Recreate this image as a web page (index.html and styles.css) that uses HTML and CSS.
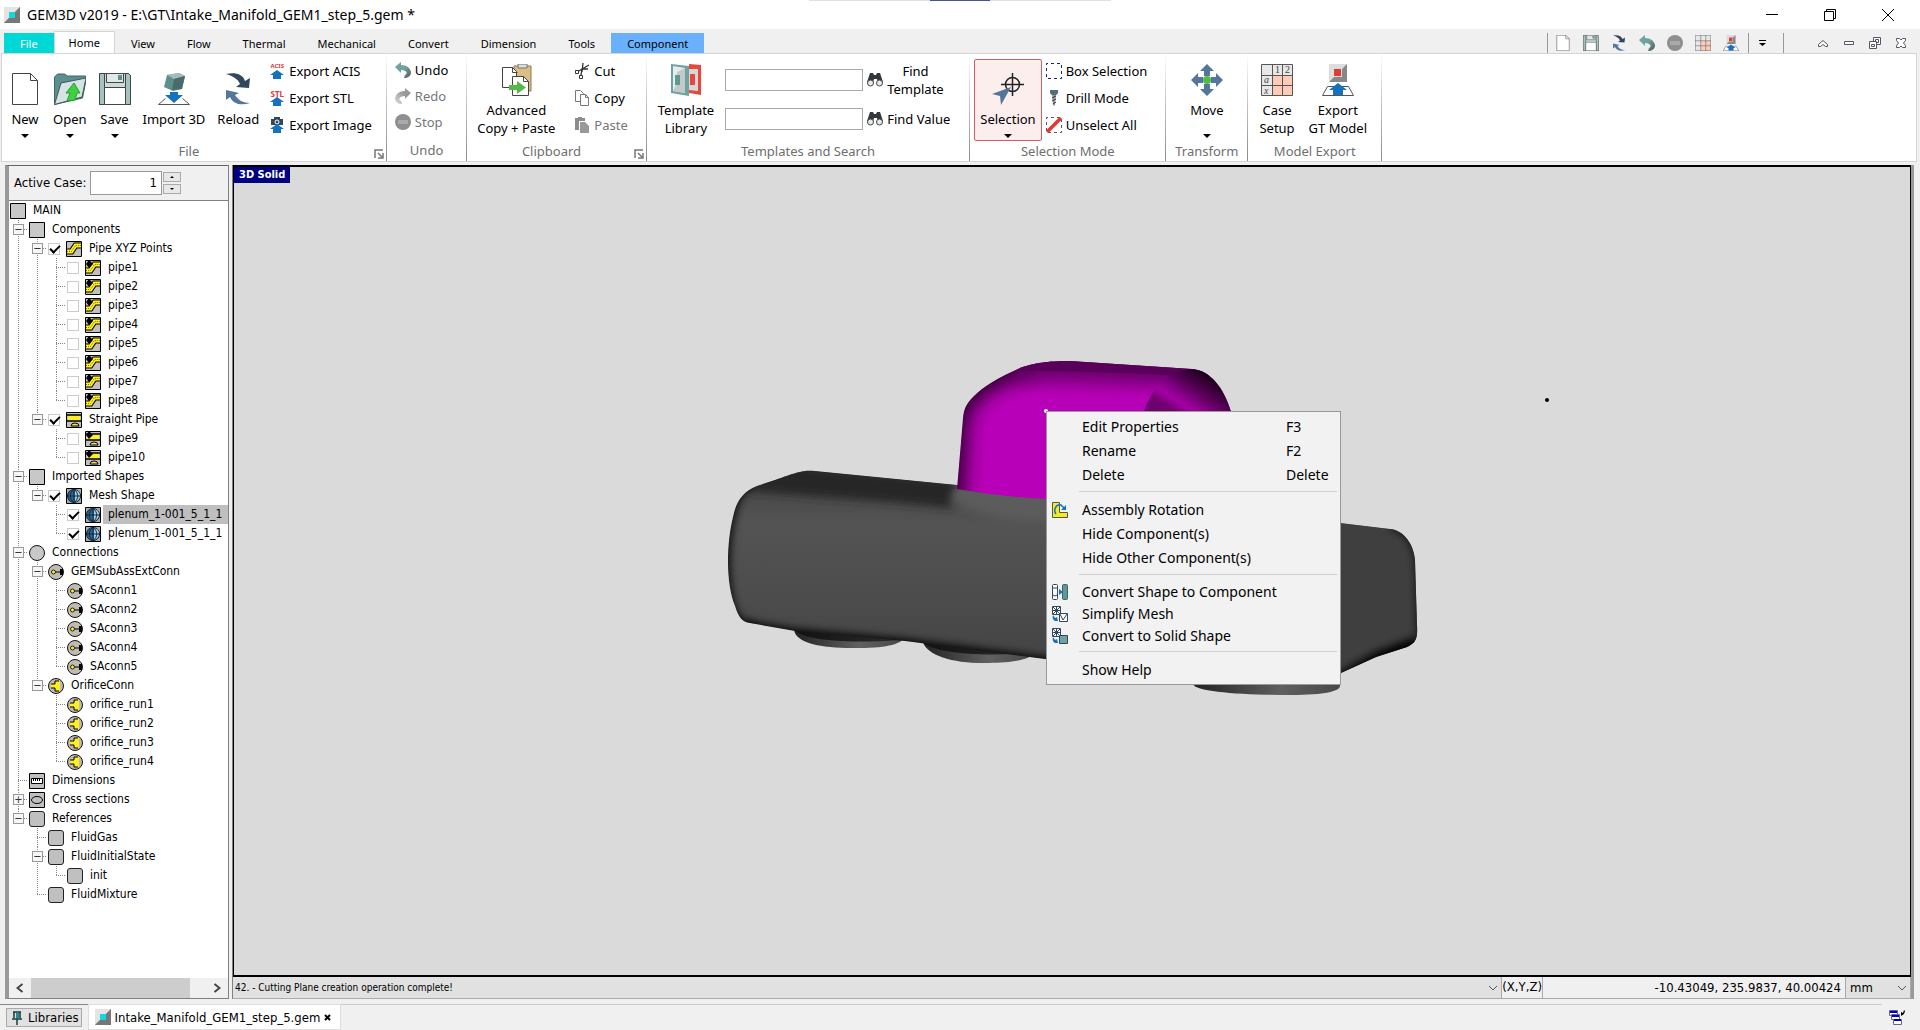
FILE: index.html
```
<!DOCTYPE html>
<html lang="en">
<head>
    <meta charset="utf-8">
    <title>GEM3D v2019</title>
    <meta name="viewport" content="width=device-width, initial-scale=1">
    <link rel="stylesheet" href="styles.css">
</head>
<body>
    <!-- shared icons -->
    <svg class="sprite" aria-hidden="true">
        <defs>
            <linearGradient id="g-undo" x1="0" y1="0" x2="1" y2="1">
                <stop offset="0.5" stop-color="#6fa3a0"/><stop offset="1" stop-color="#555"/>
            </linearGradient>
            <linearGradient id="g-redo" x1="1" y1="0" x2="0" y2="1">
                <stop offset="0.4" stop-color="#999"/><stop offset="1" stop-color="#ddd"/>
            </linearGradient>
        </defs>
        <symbol id="i-app" viewBox="0 0 16 16">
            <path d="M0 0h16v16H0z" fill="#999"/><path d="M0 0h16L11 5H5v6L0 16z" fill="#e4e4e4"/><path d="M16 0v16H0l5-5h6V5z" fill="#777"/>
            <path d="M5 5h6v6H5z" fill="#14d8dc"/>
        </symbol>
        <symbol id="i-new" viewBox="0 0 32 32"><path d="M3.500.5h18l7 7v24h-25z" fill="#fff" stroke="#444"/><path d="M21.500.5v7h7" fill="none" stroke="#444"/></symbol>
        <symbol id="i-open" viewBox="0 0 32 32">
            <path d="M.5 31.500V4l3-3h7l3 2h18v7l-3 15z" fill="#5d8f8c" stroke="#3f6664"/>
            <path d="M.5 31.500L7 10l25-5-4 19z" fill="#d5e3e2" stroke="#456"/>
            <path d="M20 10l6 10h-3l-2 7-8 1 3-8h-4z" fill="#40d040" stroke="#2a9a35"/>
        </symbol>
        <symbol id="i-save" viewBox="0 0 32 32">
            <path d="M.5.5h29l2 2v29H.5z" fill="#c9dcda" stroke="#444"/><path d="M.5.500h5v31h-5zM26.500.5h3l2 2v29h-5z" fill="#a5c4c1" stroke="#444"/>
            <path d="M7.500.5h17v9h-17z" fill="#dfe9e8" stroke="#444"/><path d="M19 2h4v5h-4z" fill="#5d8f8c"/>
            <path d="M5.500 14.500h21v17h-21z" fill="#fff" stroke="#444"/>
        </symbol>
        <symbol id="i-import" viewBox="0 0 32 32">
            <path d="M9 2l12-2 6 3-3 13-9 2-9-4z" fill="#5d8f8c"/><path d="M9 2l12-2 6 3-11 3z" fill="#a8bbb9"/><path d="M16 6l11-3-3 13-10 1z" fill="#4a6b6e"/>
            <path d="M7.500 25.500L.5 31.500h31l-7-6" fill="#fff" stroke="#555"/>
            <path d="M12 19h8v3h5l-9 8-9-8h5z" fill="#1572bd"/>
        </symbol>
        <symbol id="i-reload" viewBox="0 0 32 32">
            <path d="M4 1c9-2 17 0 19 7l5-3-1 10-13-1 4-3C16 6 11 3 4 1z" fill="#30475e"/>
            <path d="M28 30c-9 3-17 1-20-6l-4 3V17l13 3-4 2c3 5 8 8 15 8z" fill="#52779a"/>
        </symbol>
        <symbol id="i-up" viewBox="0 0 16 9"><path d="M8 0l7 5h-3v4H4V5H1z" fill="#1572bd"/></symbol>
        <symbol id="i-image" viewBox="0 0 16 16">
            <path d="M2 2h3V0h6v2h3v6H2z" fill="#30475e"/><circle cx="8" cy="5" r="2" fill="none" stroke="#fff"/>
            <path d="M8 7l7 5h-3v4H4v-4H1z" fill="#1572bd"/>
        </symbol>
        <symbol id="i-undo" viewBox="0 0 16 16"><path d="M0 5l6-5v3c6 0 9 3 10 7 0 4-3 6-7 6l1-3c3-1 2-5-4-5v3z" fill="url(#g-undo)"/></symbol>
        <symbol id="i-redo" viewBox="0 0 16 16"><path d="M16 5l-6-5v3C4 3 1 6 0 10c0 4 3 6 7 6l-1-3c-3-1-2-5 4-5v3z" fill="url(#g-redo)"/></symbol>
        <symbol id="i-stop" viewBox="0 0 16 16"><circle cx="8" cy="8" r="8" fill="#8f8f8f"/><path d="M3 6h10v4H3z" fill="#aaa"/></symbol>
        <symbol id="i-advanced" viewBox="0 0 32 32">
            <path d="M14 2h17v25H14z" fill="#d9bf86" stroke="#8a7a50"/><path d="M18 0h9v4h-9z" fill="#ddd" stroke="#777"/>
            <path d="M2.500 3.500h10l4 4v16h-14z" fill="#fff" stroke="#444"/><path d="M12.500 3.500v5h5" fill="none" stroke="#444"/>
            <path d="M12.500 12.500h11l5 5v14h-16z" fill="#fff" stroke="#444"/><path d="M23.500 12.500v5h5" fill="none" stroke="#444"/>
            <path d="M9 21h8v-4l9 6.500-9 6.500v-4H9z" fill="#55b948"/>
        </symbol>
        <symbol id="i-cut" viewBox="0 0 16 16">
            <path d="M9 0L8 9M15 2L3 9M14 6H8l-1 6" fill="none" stroke="#333" stroke-width="1.300"/><path d="M1.500 7.500h3v3h-3zM5.500 12.500h3v3h-3z" fill="#fff" stroke="#333"/>
        </symbol>
        <symbol id="i-copy" viewBox="0 0 16 16"><path d="M1.500.5h5l3 3v8h-8z" fill="#fff" stroke="#777"/><path d="M6.500 4.500h5l3 3v8h-8z" fill="#fff" stroke="#777"/><path d="M11.500 4.500v3h3" fill="none" stroke="#777"/></symbol>
        <symbol id="i-paste" viewBox="0 0 16 16"><path d="M1 1h3V0h4v1h3v3H5v9H1z" fill="#8c8c8c"/><path d="M6 5h5l4 4v7H6z" fill="#999"/></symbol>
        <symbol id="i-library" viewBox="0 0 32 32">
            <path d="M31 1v30l-12-2V0z" fill="#e8483c"/><path d="M28 5v22l-9-1V5z" fill="#d8d8d8"/><path d="M20 10h5v11h-5z" fill="#e8483c"/>
            <path d="M1 0l18 2v30L1 29z" fill="#6fa3a0"/><path d="M3 2l12 2v25L3 27z" fill="#e8ecec"/><path d="M3 27l4-8V8l8-4v25z" fill="#c4c8ca"/><path d="M5 11h5v10H5z" fill="#5d9995"/>
        </symbol>
        <symbol id="i-find" viewBox="0 0 16 14">
            <path d="M3 0h3l1 2h2l1-2h3l3 9-5 1-1-4H7l-1 4-6-1z" fill="#34383c"/>
            <circle cx="3.500" cy="10" r="3" fill="#e6eaec" stroke="#444"/><circle cx="12.500" cy="10" r="3" fill="#e6eaec" stroke="#444"/>
        </symbol>
        <symbol id="i-select" viewBox="0 0 32 32">
            <circle cx="20.500" cy="11.500" r="7" fill="none" stroke="#222" stroke-width="1.500"/><path d="M20.500 0v23M9 11.500h23" stroke="#222" stroke-width="1.500"/>
            <path d="M19 14L9 32l-1-9-8-2z" fill="#52779a"/>
        </symbol>
        <symbol id="i-box" viewBox="0 0 16 16"><path d="M.5.5h15v15H.5z" fill="none" stroke="#1a1a9c" stroke-dasharray="3 3" stroke-dashoffset="1.500"/></symbol>
        <symbol id="i-drill" viewBox="0 0 16 16"><path d="M4 0h8v3l-2 2-1 10-1 1-1-1L6 5 4 3z" fill="#9a9a9a"/><path d="M4 0h8v3l-2 2H6L4 3z" fill="#52707c"/><path d="M6 8l4-2M6 11l4-2M7 14l3-2" stroke="#333"/></symbol>
        <symbol id="i-unselect" viewBox="0 0 16 16"><path d="M.5.5h15v15H.5z" fill="none" stroke="#556" stroke-dasharray="3 3" stroke-dashoffset="1.500"/><path d="M1 15L15 1" stroke="#dc3c32" stroke-width="3.500"/></symbol>
        <symbol id="i-move" viewBox="0 0 32 32">
            <path d="M16 0l7 7h-4v5h-6V7H9zM16 32l7-7h-4v-5h-6v5H9zM0 16l7-7v4h5v6H7v4zM32 16l-7-7v4h-5v6h5v4z" fill="#52779a"/><circle cx="16" cy="16" r="4" fill="#55b948"/>
        </symbol>
        <symbol id="i-case" viewBox="0 0 32 32">
            <path d="M0 0h32v32H0z" fill="#e8e8e8"/><path d="M11 11h21v21H11z" fill="#fcccb8"/>
            <path d="M.5.5h31v31H.5zM11.500 0v32M21.500 0v32M0 11.500h32M0 21.500h32" fill="none" stroke="#555"/>
        </symbol>
        <symbol id="i-export" viewBox="0 0 32 32">
            <path d="M7 0h18v18H7z" fill="#ddd"/><path d="M25 0v18H7l5-5h8V5z" fill="#888"/><path d="M12 5h7v7h-7z" fill="#e03c34"/>
            <path d="M5.500 22.500L.5 31.500h31l-5-9z" fill="#fff" stroke="#555"/>
            <path d="M16 19l9 7h-4v5H11v-5H7z" fill="#1572bd"/>
        </symbol>
        <symbol id="i-launch" viewBox="0 0 10 10"><path d="M1 9V1h8" fill="none" stroke="#777" stroke-width="1.500"/><path d="M4 4l4 4M9 4v5H4" fill="none" stroke="#777" stroke-width="1.500"/></symbol>
        <!-- tree icons -->
        <symbol id="t-square" viewBox="0 0 16 16"><path d="M.5.5h15v15H.5z" fill="#c8c8c8" stroke="#000"/></symbol>
        <symbol id="t-round" viewBox="0 0 16 16"><rect x=".5" y=".5" width="15" height="15" rx="2.500" fill="#c0c0c0" stroke="#222"/></symbol>
        <symbol id="t-circle" viewBox="0 0 16 16"><circle cx="8" cy="8" r="7.500" fill="#c8c8c8" stroke="#111"/></symbol>
        <symbol id="t-pipe" viewBox="0 0 16 16">
            <path d="M.5.5h15v15H.5z" fill="#c0c0c0"/><path d="M1 10.500h4.500l4-6H15" fill="none" stroke="#000" stroke-width="6"/><path d="M1 10.500h4.500l4-6H15" fill="none" stroke="#ffee20" stroke-width="4"/><path d="M1 10.500h4.500l4-6H15" fill="none" stroke="#777000" stroke-dasharray="1 1"/><path d="M.5.5h15v15H.5z" fill="none" stroke="#000"/>
        </symbol>
        <symbol id="t-pipe-pt" viewBox="0 0 16 16"><use href="#t-pipe"/><path d="M4 0l4 4-4 4-3-4z"/></symbol>
        <symbol id="t-straight" viewBox="0 0 16 16">
            <path d="M.5.5h15v15H.5z" fill="#c0c0c0" stroke="#000"/><path d="M2 3h12v6H2z" fill="#ffee20"/><path d="M1 3h14M1 9h14" stroke="#000" stroke-width="1.300"/><path d="M5 14a4 3 0 0 1 8 0z" fill="#f0e060" stroke="#000"/>
        </symbol>
        <symbol id="t-straight-pt" viewBox="0 0 16 16"><use href="#t-straight"/><path d="M4 0l4 4-4 4-3-4z"/></symbol>
        <symbol id="t-mesh" viewBox="0 0 16 16">
            <path d="M.5.5h15v15H.5z" fill="#a8a8a8" stroke="#000"/><circle cx="8" cy="8" r="6.500" fill="#2c6692" stroke="#0c1c2c"/>
            <path d="M9 2c4 1 5 3 5 6s-2 5-5 6z" fill="#a8cce0"/><path d="M8 1C3 6 3 10 8 15c5-5 5-9 0-14zM2 8h12M8 1v14" fill="none" stroke="#10283c"/>
        </symbol>
        <symbol id="t-conn" viewBox="0 0 16 16">
            <circle cx="8" cy="8" r="7.500" fill="#c0bcb4" stroke="#111"/><path d="M7 8h5" stroke="#000"/><path d="M12 5h3v6h-3z"/><circle cx="5.500" cy="8" r="2" fill="#ffee20" stroke="#222"/>
        </symbol>
        <symbol id="t-orifice" viewBox="0 0 16 16">
            <circle cx="8" cy="8" r="7.500" fill="#c0bcb4" stroke="#111"/><path d="M7 3h5v10H7v-3H3V6h4z" fill="#ffee20"/><path d="M3 6h4V3h4M3 10h4v3h4" fill="none" stroke="#000"/>
        </symbol>
        <symbol id="t-dim" viewBox="0 0 16 16"><path d="M.5.5h15v15H.5z" fill="#c0c0c0" stroke="#000"/><path d="M2.500 5.500h11v5h-11z" fill="#fff" stroke="#000"/><path d="M4.500 6v2M6.500 6v2M8.500 6v2M10.500 6v2" stroke="#000"/></symbol>
        <symbol id="t-cross" viewBox="0 0 16 16"><path d="M.5.5h15v15H.5z" fill="#c0c0c0" stroke="#000"/><ellipse cx="8" cy="8" rx="5.500" ry="3.500" fill="none" stroke="#000"/></symbol>
    </svg>

    <header class="titlebar">
        <svg class="ic16"><use href="#i-app"/></svg>
        <h1>GEM3D v2019 - E:\GT\Intake_Manifold_GEM1_step_5.gem *</h1>
        <div class="window-buttons">
            <button aria-label="Minimize"><svg viewBox="0 0 14 14"><path d="M1 6.500h12"/></svg></button>
            <button aria-label="Restore"><svg viewBox="0 0 14 14"><path d="M1.500 3.500h9v9h-9zM3.500 3V1.500h9v9H11"/></svg></button>
            <button aria-label="Close"><svg viewBox="0 0 14 14"><path d="M1 1l12 12M13 1L1 13"/></svg></button>
        </div>
    </header>

    <nav class="tabs">
        <button class="tab file">File</button>
        <button class="tab active">Home</button>
        <button class="tab">View</button>
        <button class="tab">Flow</button>
        <button class="tab">Thermal</button>
        <button class="tab">Mechanical</button>
        <button class="tab">Convert</button>
        <button class="tab">Dimension</button>
        <button class="tab">Tools</button>
        <button class="tab component">Component</button>
        <div class="quick">
            <button aria-label="New"><svg class="ic16"><use href="#i-new"/></svg></button>
            <button aria-label="Save"><svg class="ic16"><use href="#i-save"/></svg></button>
            <button aria-label="Reload"><svg class="ic16"><use href="#i-reload"/></svg></button>
            <button aria-label="Undo"><svg class="ic16"><use href="#i-undo"/></svg></button>
            <button aria-label="Stop"><svg class="ic16"><use href="#i-stop"/></svg></button>
            <button aria-label="Case Setup"><svg class="ic16"><use href="#i-case"/></svg></button>
            <button aria-label="Export GT Model"><svg class="ic16"><use href="#i-export"/></svg></button>
        </div>
        <button class="quick-more" aria-label="Customize"><svg viewBox="0 0 7 6"><path d="M0 0h7v1H0zM0 3h7L3.500 6z"/></svg></button>
        <div class="mdi">
            <button aria-label="Collapse ribbon"><svg viewBox="0 0 12 12"><path d="M1.500 7.500L6 3.500l4.500 4v2h-2L6 7.500l-2.500 2h-2z"/></svg></button>
            <button aria-label="Minimize document"><svg viewBox="0 0 12 12"><path d="M1.500 4.500h9v3h-9z"/></svg></button>
            <button aria-label="Restore document"><svg viewBox="0 0 12 12"><path d="M.5 4.500h7v7h-7zM2.500 7.500h3v2h-3zM4.500 4V.5h7v7H8M6.500 4V2.500h3v3H8"/></svg></button>
            <button aria-label="Close document"><svg viewBox="0 0 12 12"><path d="M1.500 1.500h3L6 3l1.500-1.500h3v2L8.500 6l2 2.500v2h-3L6 9l-1.500 1.500h-3v-2L3.500 6l-2-2.500z"/></svg></button>
        </div>
    </nav>

    <div class="ribbon">
        <section class="group">
            <div class="group-body files">
                <button class="big"><svg class="ic32"><use href="#i-new"/></svg>New<i class="caret"></i></button>
                <button class="big"><svg class="ic32"><use href="#i-open"/></svg>Open<i class="caret"></i></button>
                <button class="big"><svg class="ic32"><use href="#i-save"/></svg>Save<i class="caret"></i></button>
                <button class="big"><svg class="ic32"><use href="#i-import"/></svg>Import 3D</button>
                <button class="big"><svg class="ic32"><use href="#i-reload"/></svg>Reload</button>
                <div class="stack exports">
                    <button><span class="tag-icon"><b>ACIS</b><svg><use href="#i-up"/></svg></span>Export ACIS</button>
                    <button><span class="tag-icon stl"><b>STL</b><svg><use href="#i-up"/></svg></span>Export STL</button>
                    <button><svg class="ic16"><use href="#i-image"/></svg>Export Image</button>
                </div>
            </div>
            <div class="group-label"><span>File</span><button aria-label="File options"><svg><use href="#i-launch"/></svg></button></div>
        </section>
        <section class="group">
            <div class="group-body">
                <div class="stack undo">
                    <button><svg class="ic16"><use href="#i-undo"/></svg>Undo</button>
                    <button disabled><svg class="ic16"><use href="#i-redo"/></svg>Redo</button>
                    <button disabled><svg class="ic16"><use href="#i-stop"/></svg>Stop</button>
                </div>
            </div>
            <div class="group-label"><span>Undo</span></div>
        </section>
        <section class="group">
            <div class="group-body clipboard">
                <button class="big two"><svg class="ic32"><use href="#i-advanced"/></svg>Advanced<br>Copy + Paste</button>
                <div class="stack">
                    <button><svg class="ic16"><use href="#i-cut"/></svg>Cut</button>
                    <button><svg class="ic16"><use href="#i-copy"/></svg>Copy</button>
                    <button disabled><svg class="ic16"><use href="#i-paste"/></svg>Paste</button>
                </div>
            </div>
            <div class="group-label"><span>Clipboard</span><button aria-label="Clipboard options"><svg><use href="#i-launch"/></svg></button></div>
        </section>
        <section class="group">
            <div class="group-body">
                <button class="big two"><svg class="ic32"><use href="#i-library"/></svg>Template<br>Library</button>
                <div class="find">
                    <input type="text" aria-label="Template to find">
                    <button><svg><use href="#i-find"/></svg><span>Find<br>Template</span></button>
                    <input type="text" aria-label="Value to find">
                    <button><svg><use href="#i-find"/></svg><span>Find Value</span></button>
                </div>
            </div>
            <div class="group-label"><span>Templates and Search</span></div>
        </section>
        <section class="group">
            <div class="group-body selection">
                <button class="big pressed"><svg class="ic32"><use href="#i-select"/></svg>Selection<i class="caret"></i></button>
                <div class="stack">
                    <button><svg class="ic16"><use href="#i-box"/></svg>Box Selection</button>
                    <button><svg class="ic16"><use href="#i-drill"/></svg>Drill Mode</button>
                    <button><svg class="ic16"><use href="#i-unselect"/></svg>Unselect All</button>
                </div>
            </div>
            <div class="group-label"><span>Selection Mode</span></div>
        </section>
        <section class="group">
            <div class="group-body transform">
                <button class="big two"><svg class="ic32"><use href="#i-move"/></svg>Move<i class="caret low"></i></button>
            </div>
            <div class="group-label"><span>Transform</span></div>
        </section>
        <section class="group">
            <div class="group-body export">
                <button class="big two">
                    <svg class="ic32" viewBox="0 0 32 32"><use href="#i-case"/><text x="14" y="9">1</text><text x="24" y="9">2</text><text x="3" y="19" class="italic">a</text><text x="3" y="30" class="italic">x</text></svg>Case<br>Setup
                </button>
                <button class="big two"><svg class="ic32"><use href="#i-export"/></svg>Export<br>GT Model</button>
            </div>
            <div class="group-label"><span>Model Export</span></div>
        </section>
    </div>

    <main class="workspace">
        <aside class="sidebar">
            <div class="case-row">
                <label for="activeCase">Active Case:</label>
                <input type="text" id="activeCase" value="1">
                <div class="spin">
                    <button aria-label="Next case"><i class="dot-up"></i></button>
                    <button aria-label="Previous case"><i class="dot-down"></i></button>
                </div>
            </div>
            <div class="tree">
                <div class="row root"><svg class="ic16"><use href="#t-square"/></svg><span>MAIN</span></div>
                <ul>
                    <li>
                        <div class="row"><button class="exp" aria-label="Collapse">−</button><svg class="ic16"><use href="#t-square"/></svg><span>Components</span></div>
                        <ul>
                            <li>
                                <div class="row"><button class="exp" aria-label="Collapse">−</button><input type="checkbox" id="c-xyz" checked><svg class="ic16"><use href="#t-pipe"/></svg><label for="c-xyz">Pipe XYZ Points</label></div>
                                <ul>
                                    <li><div class="row"><input type="checkbox" id="c-p1"><svg class="ic16"><use href="#t-pipe-pt"/></svg><label for="c-p1">pipe1</label></div></li>
                                    <li><div class="row"><input type="checkbox" id="c-p2"><svg class="ic16"><use href="#t-pipe-pt"/></svg><label for="c-p2">pipe2</label></div></li>
                                    <li><div class="row"><input type="checkbox" id="c-p3"><svg class="ic16"><use href="#t-pipe-pt"/></svg><label for="c-p3">pipe3</label></div></li>
                                    <li><div class="row"><input type="checkbox" id="c-p4"><svg class="ic16"><use href="#t-pipe-pt"/></svg><label for="c-p4">pipe4</label></div></li>
                                    <li><div class="row"><input type="checkbox" id="c-p5"><svg class="ic16"><use href="#t-pipe-pt"/></svg><label for="c-p5">pipe5</label></div></li>
                                    <li><div class="row"><input type="checkbox" id="c-p6"><svg class="ic16"><use href="#t-pipe-pt"/></svg><label for="c-p6">pipe6</label></div></li>
                                    <li><div class="row"><input type="checkbox" id="c-p7"><svg class="ic16"><use href="#t-pipe-pt"/></svg><label for="c-p7">pipe7</label></div></li>
                                    <li><div class="row"><input type="checkbox" id="c-p8"><svg class="ic16"><use href="#t-pipe-pt"/></svg><label for="c-p8">pipe8</label></div></li>
                                </ul>
                            </li>
                            <li>
                                <div class="row"><button class="exp" aria-label="Collapse">−</button><input type="checkbox" id="c-straight" checked><svg class="ic16"><use href="#t-straight"/></svg><label for="c-straight">Straight Pipe</label></div>
                                <ul>
                                    <li><div class="row"><input type="checkbox" id="c-p9"><svg class="ic16"><use href="#t-straight-pt"/></svg><label for="c-p9">pipe9</label></div></li>
                                    <li><div class="row"><input type="checkbox" id="c-p10"><svg class="ic16"><use href="#t-straight-pt"/></svg><label for="c-p10">pipe10</label></div></li>
                                </ul>
                            </li>
                        </ul>
                    </li>
                    <li>
                        <div class="row"><button class="exp" aria-label="Collapse">−</button><svg class="ic16"><use href="#t-square"/></svg><span>Imported Shapes</span></div>
                        <ul>
                            <li>
                                <div class="row"><button class="exp" aria-label="Collapse">−</button><input type="checkbox" id="c-mesh" checked><svg class="ic16"><use href="#t-mesh"/></svg><label for="c-mesh">Mesh Shape</label></div>
                                <ul>
                                    <li><div class="row selected"><input type="checkbox" id="c-m1" checked><svg class="ic16"><use href="#t-mesh"/></svg><label for="c-m1">plenum_1-001_5_1_1</label></div></li>
                                    <li><div class="row"><input type="checkbox" id="c-m2" checked><svg class="ic16"><use href="#t-mesh"/></svg><label for="c-m2">plenum_1-001_5_1_1</label></div></li>
                                </ul>
                            </li>
                        </ul>
                    </li>
                    <li>
                        <div class="row"><button class="exp" aria-label="Collapse">−</button><svg class="ic16"><use href="#t-circle"/></svg><span>Connections</span></div>
                        <ul>
                            <li>
                                <div class="row"><button class="exp" aria-label="Collapse">−</button><svg class="ic16"><use href="#t-conn"/></svg><span>GEMSubAssExtConn</span></div>
                                <ul>
                                    <li><div class="row"><svg class="ic16"><use href="#t-conn"/></svg><span>SAconn1</span></div></li>
                                    <li><div class="row"><svg class="ic16"><use href="#t-conn"/></svg><span>SAconn2</span></div></li>
                                    <li><div class="row"><svg class="ic16"><use href="#t-conn"/></svg><span>SAconn3</span></div></li>
                                    <li><div class="row"><svg class="ic16"><use href="#t-conn"/></svg><span>SAconn4</span></div></li>
                                    <li><div class="row"><svg class="ic16"><use href="#t-conn"/></svg><span>SAconn5</span></div></li>
                                </ul>
                            </li>
                            <li>
                                <div class="row"><button class="exp" aria-label="Collapse">−</button><svg class="ic16"><use href="#t-orifice"/></svg><span>OrificeConn</span></div>
                                <ul>
                                    <li><div class="row"><svg class="ic16"><use href="#t-orifice"/></svg><span>orifice_run1</span></div></li>
                                    <li><div class="row"><svg class="ic16"><use href="#t-orifice"/></svg><span>orifice_run2</span></div></li>
                                    <li><div class="row"><svg class="ic16"><use href="#t-orifice"/></svg><span>orifice_run3</span></div></li>
                                    <li><div class="row"><svg class="ic16"><use href="#t-orifice"/></svg><span>orifice_run4</span></div></li>
                                </ul>
                            </li>
                        </ul>
                    </li>
                    <li><div class="row"><svg class="ic16"><use href="#t-dim"/></svg><span>Dimensions</span></div></li>
                    <li><div class="row"><button class="exp" aria-label="Expand">+</button><svg class="ic16"><use href="#t-cross"/></svg><span>Cross sections</span></div></li>
                    <li>
                        <div class="row"><button class="exp" aria-label="Collapse">−</button><svg class="ic16"><use href="#t-round"/></svg><span>References</span></div>
                        <ul>
                            <li><div class="row"><svg class="ic16"><use href="#t-round"/></svg><span>FluidGas</span></div></li>
                            <li>
                                <div class="row"><button class="exp" aria-label="Collapse">−</button><svg class="ic16"><use href="#t-round"/></svg><span>FluidInitialState</span></div>
                                <ul>
                                    <li><div class="row"><svg class="ic16"><use href="#t-round"/></svg><span>init</span></div></li>
                                </ul>
                            </li>
                            <li><div class="row"><svg class="ic16"><use href="#t-round"/></svg><span>FluidMixture</span></div></li>
                        </ul>
                    </li>
                </ul>
            </div>
            <div class="scrollbar">
                <button aria-label="Scroll left"><svg viewBox="0 0 8 10"><path d="M6.500 1l-5 4 5 4"/></svg></button>
                <div class="track"><div class="thumb"></div></div>
                <button aria-label="Scroll right"><svg viewBox="0 0 8 10"><path d="M1.500 1l5 4-5 4"/></svg></button>
            </div>
        </aside>

        <section class="view">
            <div class="canvas">
                <svg class="model" viewBox="234 167 1676 808">
                    <defs>
                        <clipPath id="m-body-clip"><path id="m-body" d="M815 471C803 470 798 472 775 480L757 486C742 492 736 502 733 517C726 545 726 585 735 606C739 619 743 622 750 623L795 631L905 641L1045 659L1200 678L1341 673L1376 657L1407 647C1415 643 1418 640 1417 625L1415 560C1414 545 1404 530 1390 529L1340 523L957 485z"/></clipPath>
                        <clipPath id="m-neck-clip"><path id="m-neck" d="M957 489L963 418C964 408 967 403 973 397C984 385 1002 376 1020 368C1035 363 1046 361 1070 361L1192 369C1210 370 1224 388 1231 411V421H1046V499Q1000 497 957 489z"/></clipPath>
                        <filter id="soft4" x="-20%" y="-50%" width="140%" height="200%"><feGaussianBlur stdDeviation="4"/></filter>
                        <filter id="soft10" filterUnits="userSpaceOnUse" x="900" y="320" width="360" height="220"><feGaussianBlur stdDeviation="10"/></filter>
                        <linearGradient id="m-front" x1="0" y1="490" x2="0" y2="660" gradientUnits="userSpaceOnUse">
                            <stop offset="0" stop-color="#484848"/><stop offset=".2" stop-color="#535353"/><stop offset=".6" stop-color="#4d4d4d"/><stop offset="1" stop-color="#444"/>
                        </linearGradient>
                        <linearGradient id="m-port" x1="0" y1="0" x2="1" y2="0">
                            <stop offset="0" stop-color="#222"/><stop offset=".6" stop-color="#606060"/><stop offset="1" stop-color="#484848"/>
                        </linearGradient>
                        <linearGradient id="m-port-in" x1="0" y1="0" x2="1" y2="0">
                            <stop offset="0" stop-color="#111"/><stop offset="1" stop-color="#2c2c2c"/>
                        </linearGradient>
                        <linearGradient id="m-bore" x1="1208" y1="368" x2="1178" y2="414" gradientUnits="userSpaceOnUse">
                            <stop offset="0" stop-color="#080008"/><stop offset=".45" stop-color="#580058"/><stop offset=".8" stop-color="#a400a4"/><stop offset="1" stop-color="#700070"/>
                        </linearGradient>
                    </defs>
                    <!-- runner ports -->
                    <path d="M794 630c2 14 32 19 66 18 28 0 43-5 43-10l-10-8z" fill="url(#m-port)"/>
                    <path d="M794 630c10 10 50 14 106 10l-10-12z" fill="url(#m-port-in)"/>
                    <path d="M923 642c4 14 32 22 66 21 24 0 42-4 43-9l-10-12z" fill="url(#m-port)"/>
                    <path d="M923 643c14 10 56 14 106 10l-10-12z" fill="url(#m-port-in)"/>
                    <path d="M1193 684c2 8 50 11 98 11 34 0 49-4 49-9v-20h-140z" fill="url(#m-port)"/>
                    <!-- plenum -->
                    <g clip-path="url(#m-body-clip)">
                        <use href="#m-body" fill="url(#m-front)"/>
                        <path d="M1341 500h90v190h-90z" fill="#3f3f3f"/>
                        <path d="M760 462L730 489L760 492C820 497 880 500 950 508L962 480z" fill="#262626" filter="url(#soft4)"/>
                        <path d="M950 500C985 518 1010 522 1060 522V490L957 484z" fill="#5c5c5c" filter="url(#soft4)"/>
                        <path d="M750 482C736 492 733 505 730 520C724 550 724 590 732 610C738 623 742 626 752 626" fill="none" stroke="#000" stroke-width="8" filter="url(#soft4)"/>
                        <path d="M745 628L795 636L905 646L1045 664L1200 682" fill="none" stroke="#000" stroke-width="14" filter="url(#soft4)"/>
                        <path d="M1341 682L1380 660L1420 645" fill="none" stroke="#000" stroke-width="18" filter="url(#soft4)"/>
                        <path d="M1420 640L1418 560C1416 542 1404 527 1390 526" fill="none" stroke="#111" stroke-width="5" filter="url(#soft4)"/>
                    </g>
                    <!-- inlet neck -->
                    <g clip-path="url(#m-neck-clip)">
                        <use href="#m-neck" fill="#b900b9"/>
                        <path d="M945 510L951 415C956 398 966 388 978 379L1030 352" fill="none" stroke="#280028" stroke-width="34" filter="url(#soft10)"/>
                        <path d="M1010 366L1200 372" stroke="#600060" stroke-width="26" filter="url(#soft10)"/>
                        <path d="M1020 371C1035 371 1130 372 1176 376L1220 376V350H1020z" fill="#58005a"/>
                        <path d="M1144 411C1152 388 1168 369 1194 369C1212 370 1224 388 1231 411V421H1144z" fill="url(#m-bore)"/>
                    </g>
                    <circle cx="1547" cy="400" r="2"/>
                    <circle cx="1046" cy="411" r="2" fill="#fff"/>
                </svg>
                <div class="view-name">3D Solid</div>
                <div class="context-menu" role="menu">
                    <button role="menuitem"><i></i><span>Edit Properties</span><kbd>F3</kbd></button>
                    <button role="menuitem"><i></i><span>Rename</span><kbd>F2</kbd></button>
                    <button role="menuitem"><i></i><span>Delete</span><kbd>Delete</kbd></button>
                    <hr>
                    <button role="menuitem"><svg class="ic16" viewBox="0 0 16 16"><path d="M.5.5h7v10h8v5H.5z" fill="#f4ec20" stroke="#555"/><path d="M4 12C1 8 4 2 9 3l3 3" fill="none" stroke="#1572bd" stroke-width="1.500"/><path d="M14 3v5H9z" fill="#1572bd"/></svg><span>Assembly Rotation</span></button>
                    <button role="menuitem"><i></i><span>Hide Component(s)</span></button>
                    <button role="menuitem"><i></i><span>Hide Other Component(s)</span></button>
                    <hr>
                    <div class="tight">
                        <button role="menuitem"><svg class="ic16" viewBox="0 0 16 16"><rect x=".5" y=".5" width="5" height="15" rx="1" fill="#fff" stroke="#30475e"/><path d="M1 4h4M1 11l2 1 2-1" stroke="#30475e" fill="none"/><rect x="10.500" y=".5" width="5" height="15" rx="1" fill="#5d9995" stroke="#3f6664"/><path d="M5 8h2V5l4 3-4 3V8" fill="#1572bd"/></svg><span>Convert Shape to Component</span></button>
                        <button role="menuitem"><svg class="ic16" viewBox="0 0 16 16"><path d="M.5.500h8v8h-8zM1 1l7 7M8 1L1 8M4.500 0v8M0 4.500h8" fill="#fff" stroke="#30475e"/><path d="M7.500 7.500h8v8h-8z" fill="#fff" stroke="#30475e"/><path d="M8 8l3 6 4-6" fill="none" stroke="#30475e"/><path d="M1 9l2 3 2-1 1 4H3c-2-1-3-3-2-6z" fill="#1572bd"/></svg><span>Simplify Mesh</span></button>
                        <button role="menuitem"><svg class="ic16" viewBox="0 0 16 16"><path d="M.5.500h8v8h-8zM1 1l7 7M8 1L1 8M4.500 0v8M0 4.500h8" fill="#fff" stroke="#30475e"/><path d="M7.500 7.500h8v8h-8z" fill="#6fa3a0" stroke="#30475e"/><path d="M1 9l2 3 2-1 1 4H3c-2-1-3-3-2-6z" fill="#1572bd"/></svg><span>Convert to Solid Shape</span></button>
                    </div>
                    <hr>
                    <button role="menuitem"><i></i><span>Show Help</span></button>
                </div>
            </div>
            <div class="status">
                <select class="message" aria-label="Messages"><option>42. - Cutting Plane creation operation complete!</option></select>
                <label for="coords">(X,Y,Z)</label>
                <input type="text" id="coords" value="-10.43049, 235.9837, 40.00424">
                <select class="units" aria-label="Units"><option>mm</option></select>
            </div>
        </section>
    </main>

    <footer class="docbar">
        <div class="library-slot">
            <button class="libraries">
                <svg viewBox="0 0 12 14"><path d="M2 1h8M3 1v6M9 1v6M1 8h10M6 8v6" fill="none" stroke="#123c3c" stroke-width="1.500"/><path d="M5 2h3v5H5z" fill="#2c8c8c"/></svg>Libraries
            </button>
        </div>
        <button class="doc-tab"><svg class="ic16"><use href="#i-app"/></svg>Intake_Manifold_GEM1_step_5.gem <svg class="close" viewBox="0 0 7 7"><path d="M1 1l5 5M6 1L1 6"/></svg></button>
        <div class="doc-line"></div>
        <button class="windows" aria-label="Windows">
            <svg viewBox="0 0 17 15"><path d="M1.500.5h8v5h-8z" fill="#fff" stroke="#668"/><path d="M2 1h7v2H2z" fill="#0000c8"/><path d="M3.500 4.500h8v5h-8z" fill="#fff" stroke="#668"/><path d="M4 5h7v2H4z" fill="#0000c8"/><path d="M5.500 9.500h8v5h-8z" fill="#fff" stroke="#668"/><path d="M6 9h7v2H6z" fill="#0000c8"/><path d="M13 5V2l2 1 1-3 1 1-1 3-3 2z"/></svg>
        </button>
    </footer>
</body>
</html>
```

FILE: styles.css
```
* {
    box-sizing: border-box;
}

body {
    margin: 0;
    min-height: 100vh;
    display: flex;
    flex-direction: column;
    background: #f0f0f0;
    color: #000;
    font-family: "Noto Sans", sans-serif;
    font-size: 13px;
    overflow: hidden;
}

button {
    font: inherit;
    color: inherit;
    background: none;
    border: none;
    padding: 0;
    margin: 0;
}

input, select {
    font: inherit;
    color: inherit;
    margin: 0;
    border-radius: 0;
}

svg {
    display: block;
    flex-shrink: 0;
}

.sprite {
    position: absolute;
    width: 0;
    height: 0;
}

.ic16 {
    width: 16px;
    height: 16px;
}

.ic32 {
    width: 32px;
    height: 32px;
}

.ic32 text {
    font: 10px "Liberation Serif", serif;
    fill: #444;
}

.ic32 .italic {
    font-style: italic;
}

/* title bar */
.titlebar {
    height: 29px;
    display: flex;
    align-items: center;
    gap: 7px;
    padding-left: 4px;
    background:
        linear-gradient(#3f539c, #3f539c) center top / 60px 1px no-repeat,
        linear-gradient(#e0e0e0, #e0e0e0) center top / 302px 1px no-repeat,
        #fff;
}

.titlebar h1 {
    margin: 0;
    padding-bottom: 1px;
    font-size: 14px;
    font-weight: 400;
    line-height: 27px;
}

.window-buttons {
    display: flex;
    margin-left: auto;
    padding-right: 3px;
}

.window-buttons button {
    width: 58px;
    height: 28px;
    display: flex;
    align-items: center;
    justify-content: center;
}

.window-buttons svg {
    width: 14px;
    height: 14px;
    fill: none;
    stroke: #000;
}

/* ribbon tabs */
.tabs {
    height: 24px;
    display: flex;
    align-items: flex-end;
    padding-left: 4px;
    font-size: 11px;
}

.tab {
    height: 20px;
    padding: 0 16px;
    line-height: 22px;
}

.tab.file {
    background: #00d8d8;
    color: #fff;
}

.tab.active {
    height: 22px;
    padding: 0 14px;
    line-height: 19px;
    background: #fff;
    border: 1px solid #d5d5d5;
    border-bottom: none;
}

.tab.component {
    background: #69b1fc;
}

.quick {
    display: flex;
    align-items: center;
    gap: 12px;
    height: 20px;
    margin-left: auto;
    padding: 0 9px 0 7px;
    border-left: 1px solid #999;
    border-right: 1px solid #999;
}

.quick-more {
    width: 35px;
    height: 20px;
    padding-left: 10px;
    border-right: 1px solid #999;
}

.quick-more svg {
    width: 7px;
    height: 6px;
}

.mdi {
    display: flex;
    gap: 14px;
    align-items: center;
    height: 20px;
    padding: 0 13px 0 33px;
}

.mdi svg {
    width: 12px;
    height: 12px;
    fill: #fff;
    stroke: #556;
}

/* ribbon */
.ribbon {
    height: 109px;
    display: flex;
    margin: 0 3px 0 1px;
    background: #fff;
    border: 1px solid #d5d5d5;
}

.group {
    display: flex;
    flex-direction: column;
    border-right: 1px solid;
    border-image: linear-gradient(#fff, #ccc 40%, #888) 1;
}

.group-body {
    display: flex;
    flex: 1;
    padding: 5px 4px 0;
}

.group-body.files {
    padding-left: 1px;
}

.group-body.clipboard {
    padding-left: 3px;
}

.big {
    display: flex;
    flex-direction: column;
    align-items: center;
    height: 82px;
    padding: 13px 5px 0;
    line-height: 18px;
    border: 1px solid transparent;
    text-align: center;
}

.big .ic32 {
    margin-bottom: 5px;
}

.big.two {
    padding: 4px 6px 0;
}

.big.pressed {
    background: #fdeeee;
    border-color: #d06060;
    border-radius: 2px;
}

.caret {
    margin-top: 6px;
    border: 4px solid transparent;
    border-top-color: #000;
    border-bottom: none;
}

.caret.low {
    margin-top: 15px;
}

.stack {
    display: flex;
    flex-direction: column;
    padding-left: 4px;
}

.stack button {
    display: flex;
    align-items: center;
    gap: 4px;
    height: 27px;
    padding-bottom: 4px;
}

.stack button:disabled {
    color: #777;
}

.stack.exports {
    padding-right: 10px;
}

.stack.undo {
    padding-right: 14px;
}

.undo button {
    height: 26px;
}

.clipboard .stack {
    padding: 0 14px 0 12px;
}

.selection .stack {
    padding-right: 14px;
}

.tag-icon {
    width: 16px;
    height: 16px;
    display: flex;
    flex-direction: column;
    align-items: center;
    color: #dc3c3c;
    font-size: 6px;
    line-height: 7px;
}

.tag-icon.stl {
    font-size: 8px;
}

.tag-icon svg {
    width: 16px;
    height: 9px;
}

.find {
    display: grid;
    grid-template-columns: 138px auto;
    column-gap: 4px;
    grid-template-rows: 39px 39px;
    align-items: center;
    padding: 1px 15px 0 4px;
}

.find input {
    width: 138px;
    height: 22px;
    border: 1px solid #aaa;
}

.find button {
    display: flex;
    align-items: center;
    gap: 4px;
    line-height: 18px;
}

.find button svg {
    width: 16px;
    height: 14px;
}

.transform {
    justify-content: center;
}

.group-body.export {
    padding-right: 7px;
}

.group-label {
    display: flex;
    align-items: center;
    height: 21px;
    padding: 0 2px 1px;
    color: #6e6e6e;
}

.group-label span {
    flex: 1;
    text-align: center;
    padding: 0 7px;
}

.group-label button {
    padding-top: 6px;
}

.group-label button svg {
    width: 10px;
    height: 10px;
}

/* workspace */
.workspace {
    flex: 1;
    display: flex;
    gap: 3px;
    min-height: 0;
    padding: 3px 6px 0 5px;
}

.sidebar {
    width: 224px;
    display: flex;
    flex-direction: column;
    border: 1px solid #808080;
    border-left: 4px solid #999;
    border-top-color: #666;
    font-family: "DejaVu Sans Condensed", "DejaVu Sans", sans-serif;
    font-size: 12px;
}

.case-row {
    display: flex;
    align-items: center;
    height: 34px;
    padding: 0 0 1px 5px;
    font-size: 13px;
}

.case-row label {
    width: 76px;
}

.case-row input {
    width: 72px;
    height: 24px;
    padding: 0 4px;
    border: 1px solid #999;
    text-align: right;
}

.spin {
    display: flex;
    flex-direction: column;
    gap: 2px;
    margin-left: 1px;
}

.spin button {
    width: 18px;
    height: 10px;
    display: flex;
    align-items: center;
    justify-content: center;
    background: #e8e8e8;
    border: 1px solid #aaa;
}

.dot-up, .dot-down {
    border: 2px solid transparent;
    border-bottom-color: #000;
    border-top: none;
}

.dot-down {
    border-top: 2px solid #000;
    border-bottom: none;
}

.tree {
    flex: 1;
    min-height: 0;
    overflow: hidden;
    background: #fff;
    border-top: 1px solid #808080;
}

.tree ul {
    list-style: none;
    margin: 0;
    padding: 0;
}

/* dotted branch lines are painted on the list items */
.tree li {
    padding-left: 19px;
    background:
        repeating-linear-gradient(#888 0 1px, transparent 1px 2px) 9px 0 / 1px 100% no-repeat,
        repeating-linear-gradient(90deg, #888 0 1px, transparent 1px 2px) 9px 9px / 10px 1px no-repeat;
}

.tree li:last-child {
    background-size: 1px 10px, 10px 1px;
}

.row {
    display: flex;
    align-items: center;
    height: 19px;
    padding-left: 1px;
    white-space: nowrap;
}

.row span, .row label {
    padding-left: 7px;
    line-height: 19px;
}

.row.selected label {
    flex: 1;
    margin-left: 2px;
    padding-left: 5px;
    background: #bfbfbf;
}

.exp {
    width: 11px;
    height: 11px;
    margin: 0 5px 0 -16px;
    flex-shrink: 0;
    background: #f6f6f6;
    border: 1px solid #999;
    color: #334;
    font-size: 11px;
    line-height: 8px;
    text-align: center;
}

.row input {
    appearance: none;
    width: 12px;
    height: 12px;
    margin-right: 6px;
    flex-shrink: 0;
    background: #fff;
    border: 1px solid #ccc;
}

.row input:checked::before {
    content: "";
    display: block;
    width: 8px;
    height: 4px;
    margin: 1px;
    border-left: 2px solid #000;
    border-bottom: 2px solid #000;
    transform: rotate(-45deg);
}

.scrollbar {
    display: flex;
    height: 20px;
    background: #f0f0f0;
}

.scrollbar button {
    width: 22px;
    display: flex;
    align-items: center;
    justify-content: center;
}

.scrollbar svg {
    width: 8px;
    height: 10px;
    fill: none;
    stroke: #444;
    stroke-width: 2;
}

.track {
    flex: 1;
}

.thumb {
    width: 91%;
    height: 100%;
    background: #cdcdcd;
}

/* 3D view */
.view {
    flex: 1;
    min-width: 0;
    display: flex;
    flex-direction: column;
    border-left: 1px solid #808080;
    border-right: 3px solid #999;
}

.canvas {
    position: relative;
    flex: 1;
    min-height: 0;
    background: #dadada;
    border: 2px solid #000;
    border-left-width: 1px;
    border-right-width: 1px;
}

.model {
    width: 100%;
    height: 100%;
}

.view-name {
    position: absolute;
    left: 0;
    top: 0;
    padding: 0 5px;
    background: #000080;
    color: #fff;
    font: bold 11px/16px "DejaVu Sans Condensed", "DejaVu Sans", sans-serif;
}

.context-menu {
    position: absolute;
    left: 812px;
    top: 244px;
    width: 295px;
    padding: 3px 5px 2px 5px;
    background: #f2f2f2;
    border: 1px solid #999;
    font-size: 14px;
}

.context-menu button {
    display: flex;
    align-items: center;
    width: 100%;
    height: 24px;
    padding-bottom: 1px;
    text-align: left;
}

.context-menu .tight button {
    height: 22px;
}

.context-menu i {
    width: 16px;
}

.context-menu span {
    flex: 1;
    padding-left: 14px;
}

.context-menu kbd {
    width: 49px;
    font: inherit;
}

.context-menu hr {
    height: 1px;
    margin: 4px -2px 6px 27px;
    border: none;
    background: #d0d0d0;
}

/* status line */
.status {
    display: flex;
    height: 22px;
    align-items: stretch;
    font-family: "DejaVu Sans Condensed", "DejaVu Sans", sans-serif;
    font-size: 13px;
    border-bottom: 1px solid #aaa;
}

.status label {
    line-height: 20px;
}

.status select {
    appearance: none;
    padding: 0 4px;
    border: none;
    border-right: 1px solid #aaa;
    background: #e1e1e1 url("data:image/svg+xml,%3Csvg xmlns='http://www.w3.org/2000/svg' width='10' height='6'%3E%3Cpath d='M1 1l4 4 4-4' fill='none' stroke='%23555'/%3E%3C/svg%3E") right 3px center no-repeat;
}

.status .message {
    flex: 1;
    padding-left: 2px;
    font-size: 10px;
}

.status .units {
    width: 66px;
    border-left: 1px solid #aaa;
}

.status input {
    width: 303px;
    padding: 0 4px;
    border: none;
    border-left: 1px solid #aaa;
    background: #f0f0f0;
    text-align: right;
}

/* open documents */
.docbar {
    display: flex;
    height: 32px;
    padding-top: 5px;
    font-size: 13px;
    font-family: "DejaVu Sans Condensed", "DejaVu Sans", sans-serif;
}

.library-slot {
    padding: 3px 6px 0 6px;
    border-top: 1px solid #888;
}

.libraries {
    display: flex;
    align-items: center;
    gap: 5px;
    height: 19px;
    padding: 0 2px 0 4px;
    background: #e1e1e1;
    border: 1px solid #aaa;
}

.libraries svg {
    width: 12px;
    height: 14px;
}

.doc-tab {
    display: flex;
    align-items: center;
    gap: 4px;
    height: 26px;
    padding: 0 9px 0 6px;
    background: #fff;
    border: 1px solid #ddd;
}

.doc-tab .close {
    width: 7px;
    height: 7px;
    stroke: #000;
    stroke-width: 2;
}

.doc-line {
    flex: 1;
    margin-right: 6px;
    border-top: 1px solid #ccc;
}

.windows {
    padding-right: 15px;
}

.windows svg {
    width: 17px;
    height: 15px;
}
```
